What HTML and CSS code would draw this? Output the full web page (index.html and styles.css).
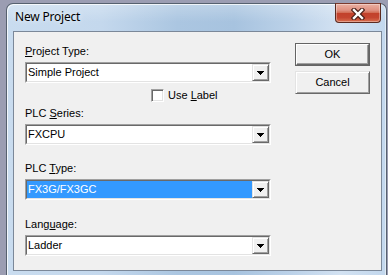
FILE: index.html
```html
<!DOCTYPE html>
<html>
<head>
<meta charset="utf-8">
<title>New Project</title>
<link rel="stylesheet" href="styles.css">
</head>
<body>
<div class="window">
  <div class="titlebar">
    <span class="title">New Project</span>
    <div class="close">
      <svg width="14" height="12" viewBox="0 0 14 12">
        <path d="M3,2 L11,10 M11,2 L3,10" stroke="#4a1f18" stroke-width="4.6" stroke-linecap="square" fill="none"/>
        <path d="M3,2 L11,10 M11,2 L3,10" stroke="#ffffff" stroke-width="2.4" stroke-linecap="square" fill="none"/>
      </svg>
    </div>
  </div>
  <div class="client">
    <div class="form">
      <div class="label"><u>P</u>roject Type:</div>
      <div class="combo">
        <div class="combo-inner">
          <span class="combo-text">Simple Project</span>
          <span class="combo-btn"><svg width="7" height="4" viewBox="0 0 7 4"><rect x="0" y="0" width="7" height="1"/><rect x="1" y="1" width="5" height="1"/><rect x="2" y="2" width="3" height="1"/><rect x="3" y="3" width="1" height="1"/></svg></span>
        </div>
      </div>
      <div class="check-row">
        <span class="checkbox"></span>
        <span class="check-label">Use <u>L</u>abel</span>
      </div>
      <div class="label gap-series">PLC <u>S</u>eries:</div>
      <div class="combo">
        <div class="combo-inner">
          <span class="combo-text">FXCPU</span>
          <span class="combo-btn"><svg width="7" height="4" viewBox="0 0 7 4"><rect x="0" y="0" width="7" height="1"/><rect x="1" y="1" width="5" height="1"/><rect x="2" y="2" width="3" height="1"/><rect x="3" y="3" width="1" height="1"/></svg></span>
        </div>
      </div>
      <div class="label gap-type">PLC <u>T</u>ype:</div>
      <div class="combo">
        <div class="combo-inner">
          <span class="combo-text selected">FX3G/FX3GC</span>
          <span class="combo-btn"><svg width="7" height="4" viewBox="0 0 7 4"><rect x="0" y="0" width="7" height="1"/><rect x="1" y="1" width="5" height="1"/><rect x="2" y="2" width="3" height="1"/><rect x="3" y="3" width="1" height="1"/></svg></span>
        </div>
      </div>
      <div class="label gap-lang">Lang<u>u</u>age:</div>
      <div class="combo">
        <div class="combo-inner">
          <span class="combo-text">Ladder</span>
          <span class="combo-btn"><svg width="7" height="4" viewBox="0 0 7 4"><rect x="0" y="0" width="7" height="1"/><rect x="1" y="1" width="5" height="1"/><rect x="2" y="2" width="3" height="1"/><rect x="3" y="3" width="1" height="1"/></svg></span>
        </div>
      </div>
    </div>
    <div class="buttons">
      <div class="btn btn-default"><span class="btn-face">OK</span></div>
      <div class="btn"><span class="btn-face">Cancel</span></div>
    </div>
  </div>
</div>
</body>
</html>
```
FILE: styles.css
```css
html, body {
  margin: 0;
  padding: 0;
}
body {
  width: 388px;
  height: 275px;
  overflow: hidden;
  background: #9b9db2;
  font-family: "Liberation Sans", Arial, sans-serif;
  font-size: 11px;
  color: #000;
}
.window {
  margin: 3px 0 0 6px;
  width: 381px;
  height: 272px;
  box-sizing: border-box;
  border: 1px solid #56616f;
  border-bottom: none;
  border-radius: 7px 7px 0 0;
  background:
    linear-gradient(180deg, rgba(255,255,255,0.25) 0px, rgba(255,255,255,0) 18px),
    linear-gradient(90deg, #c9dcef 0%, #c4d8ed 25%, #abc6e1 45%, #a7c3df 60%, #bcd2e9 75%, #d3e2f2 88%, #c2d7ed 100%);
  box-shadow: inset 1px 1px 0 rgba(255,255,255,0.75), inset -1px 0 0 rgba(255,255,255,0.5);
  display: flex;
  flex-direction: column;
  padding: 0 4px 3px 6px;
}
.titlebar {
  height: 27px;
  flex: none;
  display: flex;
  justify-content: space-between;
  align-items: flex-start;
}
.title {
  font-family: "Noto Sans", "Open Sans", sans-serif;
  font-size: 12px;
  line-height: 16px;
  padding: 5px 0 0 2px;
  letter-spacing: -0.2px;
  color: #000;
  text-shadow: 0 0 5px rgba(255,255,255,0.9);
}
.close {
  width: 46px;
  height: 20px;
  margin: -1px 1px 0 0;
  box-sizing: border-box;
  border: 1px solid #5b2a20;
  border-top-color: #7a3a2e;
  border-radius: 0 0 4px 4px;
  background: linear-gradient(180deg, #eab0a2 0%, #df9080 35%, #d26d56 48%, #c2412b 52%, #c44530 75%, #d8704f 100%);
  box-shadow: inset 0 0 0 1px rgba(255,255,255,0.35);
  display: flex;
  align-items: center;
  justify-content: center;
}
.close svg {
  display: block;
  margin-top: 1px;
}
.client {
  flex: none;
  height: 240px;
  box-sizing: border-box;
  border: 1px solid #7b8899;
  background: #f0f0f0;
  display: flex;
  align-items: flex-start;
  padding: 11px 0 0 11px;
}
.form {
  width: 246px;
  padding-top: 2px;
  display: flex;
  flex-direction: column;
}
.label {
  height: 13px;
  line-height: 13px;
  white-space: nowrap;
}
.gap-series { margin-top: 5px; }
.gap-type { margin-top: 17px; }
.gap-lang { margin-top: 18px; }
.combo {
  margin-top: 4px;
  height: 21px;
  box-sizing: border-box;
  border: 1px solid;
  border-color: #a0a0a0 #ffffff #ffffff #a0a0a0;
}
.combo-inner {
  height: 19px;
  box-sizing: border-box;
  border: 1px solid;
  border-color: #696969 #e3e3e3 #e3e3e3 #696969;
  background: #fff;
  display: flex;
}
.combo-text {
  flex: 1;
  line-height: 17px;
  padding-left: 1px;
  white-space: nowrap;
}
.combo-text.selected {
  background: #3399ff;
  color: #fff;
}
.combo-btn {
  width: 17px;
  height: 17px;
  box-sizing: border-box;
  border: 1px solid;
  border-color: #e3e3e3 #696969 #696969 #e3e3e3;
  box-shadow: inset 1px 1px 0 #ffffff, inset -1px -1px 0 #a0a0a0;
  background: #f0f0f0;
  display: flex;
  align-items: center;
  justify-content: center;
}
.combo-btn svg {
  display: block;
  fill: #000;
  shape-rendering: crispEdges;
}
.check-row {
  margin-top: 6px;
  padding-left: 126px;
  height: 13px;
  display: flex;
  align-items: center;
}
.checkbox {
  width: 13px;
  height: 13px;
  box-sizing: border-box;
  border: 1px solid;
  border-color: #a0a0a0 #ffffff #ffffff #a0a0a0;
  box-shadow: inset 1px 1px 0 #696969, inset -1px -1px 0 #e3e3e3;
  background: #fff;
}
.check-label {
  margin-left: 4px;
  line-height: 13px;
}
.buttons {
  margin-left: 24px;
  display: flex;
  flex-direction: column;
  gap: 5px;
}
.btn {
  width: 75px;
  height: 23px;
  box-sizing: border-box;
  border: 1px solid;
  border-color: #e3e3e3 #696969 #696969 #e3e3e3;
  box-shadow: inset 1px 1px 0 #ffffff, inset -1px -1px 0 #a0a0a0;
  background: #f0f0f0;
  display: flex;
  align-items: center;
  justify-content: center;
}
.btn-default {
  border: 1px solid #646464;
  box-shadow: none;
  padding: 0;
}
.btn-default .btn-face {
  width: 100%;
  height: 100%;
  box-sizing: border-box;
  border: 1px solid;
  border-color: #ffffff #696969 #696969 #ffffff;
  box-shadow: inset -1px -1px 0 #a0a0a0;
  display: flex;
  align-items: center;
  justify-content: center;
}
.btn-face {
  line-height: 13px;
}
```
